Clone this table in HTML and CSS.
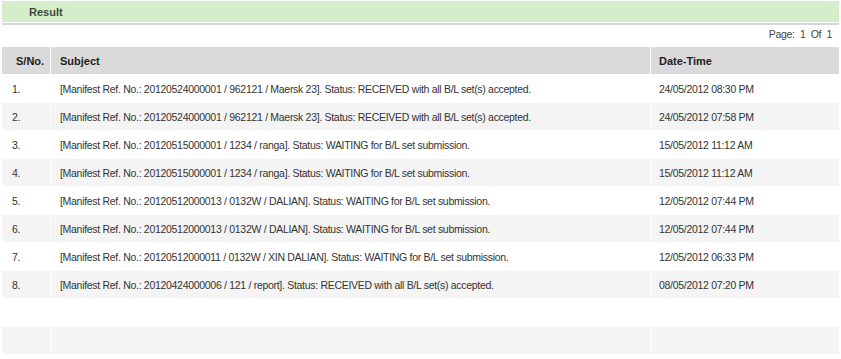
FILE: index.html
```html
<!DOCTYPE html>
<html>
<head>
<meta charset="utf-8">
<link rel="stylesheet" href="styles.css">
</head>
<body>
<div class="wrap">
  <div class="titlebar"><span class="title">Result</span></div>
  <div class="pager">Page:&nbsp; 1&nbsp; Of&nbsp; 1</div>
  <table class="grid">
    <thead>
      <tr><th class="c-no">S/No.</th><th class="c-subj">Subject</th><th class="c-date">Date-Time</th></tr>
    </thead>
    <tbody>
      <tr><td class="c-no">1.</td><td class="c-subj">[Manifest Ref. No.: 20120524000001 / 962121 / Maersk 23]. Status: RECEIVED with all B/L set(s) accepted.</td><td class="c-date">24/05/2012 08:30 PM</td></tr>
      <tr><td class="c-no">2.</td><td class="c-subj">[Manifest Ref. No.: 20120524000001 / 962121 / Maersk 23]. Status: RECEIVED with all B/L set(s) accepted.</td><td class="c-date">24/05/2012 07:58 PM</td></tr>
      <tr><td class="c-no">3.</td><td class="c-subj">[Manifest Ref. No.: 20120515000001 / 1234 / ranga]. Status: WAITING for B/L set submission.</td><td class="c-date">15/05/2012 11:12 AM</td></tr>
      <tr><td class="c-no">4.</td><td class="c-subj">[Manifest Ref. No.: 20120515000001 / 1234 / ranga]. Status: WAITING for B/L set submission.</td><td class="c-date">15/05/2012 11:12 AM</td></tr>
      <tr><td class="c-no">5.</td><td class="c-subj">[Manifest Ref. No.: 20120512000013 / 0132W / DALIAN]. Status: WAITING for B/L set submission.</td><td class="c-date">12/05/2012 07:44 PM</td></tr>
      <tr><td class="c-no">6.</td><td class="c-subj">[Manifest Ref. No.: 20120512000013 / 0132W / DALIAN]. Status: WAITING for B/L set submission.</td><td class="c-date">12/05/2012 07:44 PM</td></tr>
      <tr><td class="c-no">7.</td><td class="c-subj">[Manifest Ref. No.: 20120512000011 / 0132W / XIN DALIAN]. Status: WAITING for B/L set submission.</td><td class="c-date">12/05/2012 06:33 PM</td></tr>
      <tr><td class="c-no">8.</td><td class="c-subj">[Manifest Ref. No.: 20120424000006 / 121 / report]. Status: RECEIVED with all B/L set(s) accepted.</td><td class="c-date">08/05/2012 07:20 PM</td></tr>
      <tr><td class="c-no"></td><td class="c-subj"></td><td class="c-date"></td></tr>
      <tr><td class="c-no"></td><td class="c-subj"></td><td class="c-date"></td></tr>
    </tbody>
  </table>
</div>
</body>
</html>
```

FILE: styles.css
```css
html, body {
  margin: 0;
  padding: 0;
  background: #ffffff;
}
body {
  font-family: "Liberation Sans", Arial, sans-serif;
  font-size: 10.5px;
  letter-spacing: -0.3px;
  color: #333333;
}
.wrap {
  padding: 1px 1px 0 1px;
}
.titlebar {
  margin: 0 1px;
  height: 21px;
  background: #d4eec9;
  display: flex;
  align-items: center;
  border-bottom: 1px solid #ffffff;
  box-shadow: 0 2px 0 #d6d6d6;
}
.title {
  padding-left: 27px;
  padding-top: 1px;
  font-weight: bold;
  font-size: 11px;
  letter-spacing: 0;
  color: #3d4a3d;
}
.pager {
  height: 14px;
  margin-top: 4px;
  margin-bottom: 6px;
  padding-right: 8px;
  text-align: right;
  line-height: 14px;
  font-size: 10.5px;
  color: #444444;
}
.grid {
  width: 100%;
  border-collapse: separate;
  border-spacing: 1px;
  margin-top: -1px;
}
.grid th {
  height: 27px;
  padding: 0;
  background: #dadada;
  text-align: left;
  font-weight: bold;
  font-size: 11px;
  letter-spacing: 0;
  color: #222222;
}
.grid td {
  height: 27px;
  padding: 0;
  text-align: left;
  color: #333333;
}
.grid tbody tr:nth-child(even) td {
  background: #f4f4f4;
}
.grid th.c-no {
  padding-left: 14px;
}
.grid td.c-no {
  padding-left: 10px;
}
.c-no {
  width: 48px;
  box-sizing: border-box;
}
.c-subj {
  padding-left: 9px !important;
}
.c-date {
  width: 188px;
  box-sizing: border-box;
  padding-left: 8px !important;
}
```
